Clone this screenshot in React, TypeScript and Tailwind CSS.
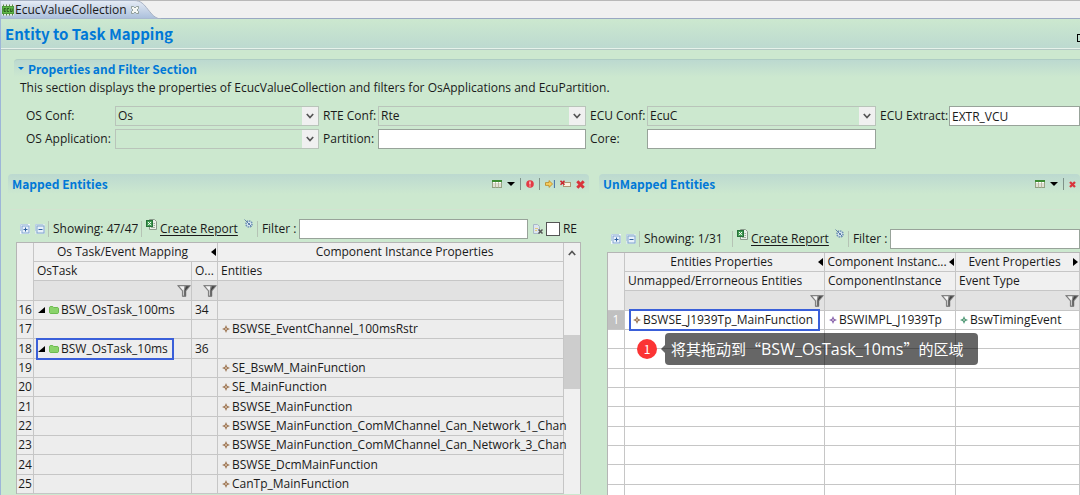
import { ReactNode } from "react";
import clsx from "clsx";

const entityRows = [
  { no: 16, task: "BSW_OsTask_100ms", order: "34" },
  { no: 17, entity: "BSWSE_EventChannel_100msRstr" },
  { no: 18, task: "BSW_OsTask_10ms", order: "36", marked: true },
  { no: 19, entity: "SE_BswM_MainFunction" },
  { no: 20, entity: "SE_MainFunction" },
  { no: 21, entity: "BSWSE_MainFunction" },
  { no: 22, entity: "BSWSE_MainFunction_ComMChannel_Can_Network_1_Chan" },
  { no: 23, entity: "BSWSE_MainFunction_ComMChannel_Can_Network_3_Chan" },
  { no: 24, entity: "BSWSE_DcmMainFunction" },
  { no: 25, entity: "CanTp_MainFunction" },
];

const emptyRows = [2, 3, 4, 5, 6, 7, 8, 9, 10];

const cell = "border-r border-b border-[#c6c6c6] p-0";
const line = "h-[19px] nth-[3n]:h-5";
const heading = "font-['Noto_Sans_CJK_SC',sans-serif] font-bold text-[#0078d7]";

function EcuIcon() {
  return (
    <svg width="12" height="12" viewBox="0 0 12 12" className="shrink-0">
      <rect y="0.5" width="12" height="11" fill="#e4efdf" />
      <path d="M1.500 0.500v11M4.500 0.500v11M7.500 0.500v11M10.500 0.500v11" stroke="#4a6b40" strokeWidth="0.900" />
      <rect x="0.5" y="2.5" width="11" height="7" fill="#62b84a" stroke="#4b9a38" />
      <path
        d="M3.8 4.5H2v3h1.8M2 6h1.6M7 4.5H5.2v3H7M8.4 4.5v3h1.8v-3"
        fill="none"
        stroke="#1f4d17"
        strokeWidth="0.8"
      />
    </svg>
  );
}

function TabCloseIcon() {
  return (
    <svg width="8" height="8" viewBox="0 0 8 8">
      <path
        d="M0.5 0.5h2L4 2 5.500.5h2v2L6 4l1.500 1.500v2h-2L4 6 2.500 7.500h-2v-2L2 4 .5 2.500z"
        fill="#f4f7f4"
        stroke="#7d8d86"
        strokeWidth="0.8"
      />
    </svg>
  );
}

function Chevron({ up }: { up?: boolean }) {
  return (
    <svg width="8" height="6" viewBox="0 0 8 6">
      <path
        d={up ? "M0.8 5 4 1.500 7.200 5" : "M0.8 1 4 4.500 7.200 1"}
        fill="none"
        stroke="#555"
        strokeWidth="1.700"
      />
    </svg>
  );
}

function TreeBox({ minus }: { minus?: boolean }) {
  return (
    <svg width="10" height="10" viewBox="0 0 10 10">
      <rect width="10" height="10" fill={minus ? "#dcebe8" : "#f4f9fb"} />
      <path d="M0.500 7V0.500H8" fill="none" stroke="#b9cfe4" />
      <rect x="2" y="2" width="7" height="7" fill="#e8f1fa" stroke="#7fa3cf" />
      <path
        d={minus ? "M3.500 5.500h4" : "M3.500 5.500h4M5.500 3.500v4"}
        stroke="#2d5f9f"
      />
    </svg>
  );
}

function ExcelIcon() {
  return (
    <svg width="11" height="11" viewBox="0 0 11 11">
      <path d="M3.500 0.500h5l2 2v8h-7z" fill="#e9efe9" stroke="#8b9a8b" />
      <path d="M5 8.500h4M7.500 4.500H9M7.500 6.500H9" stroke="#9db59d" />
      <rect x="0.500" y="1.500" width="6" height="6" fill="#3c9a4e" stroke="#27713a" />
      <path d="m2 3 3 3.200M5 3 2 6.200" stroke="#fff" />
    </svg>
  );
}

function GearIcon() {
  return (
    <svg width="9" height="9" viewBox="0 0 9 9">
      <circle cx="5" cy="5" r="3" fill="#d7e8f0" stroke="#6d8fb5" strokeWidth="1.500" strokeDasharray="1.500 0.800" />
      <circle cx="5" cy="5" r="1" fill="#4c75a8" />
      <path d="m0.500 0.500 7 7" stroke="#4c6f9c" strokeWidth="0.800" />
    </svg>
  );
}

function TableIcon() {
  return (
    <svg width="10" height="8" viewBox="0 0 10 8">
      <rect x="0.500" y="0.500" width="9" height="7" fill="#fff" stroke="#8f9f80" />
      <path d="M0 1h10" stroke="#3d8c32" strokeWidth="2" />
      <path d="M3.500 2v6M6.500 2v6M0 4h10M0 6h10" stroke="#a9a98a" strokeWidth="0.700" />
    </svg>
  );
}

function ErrorIcon() {
  return (
    <svg width="8" height="8" viewBox="0 0 8 8">
      <circle cx="4" cy="4" r="3.800" fill="#e23a44" />
      <path d="M4 1.600v3M4 5.400v1.200" stroke="#ffe5e5" strokeWidth="1.300" />
    </svg>
  );
}

function MoveIcon() {
  return (
    <svg width="10" height="8" viewBox="0 0 10 8">
      <path
        d="M0.500 2.600h3.500V0.600L7.600 4 4 7.400v-2H0.500z"
        fill="#f7cf62"
        stroke="#b98621"
        strokeWidth="0.800"
      />
      <path d="M9.400 0v8" stroke="#3f6ea8" />
    </svg>
  );
}

function UnmapIcon() {
  return (
    <svg width="11" height="8" viewBox="0 0 11 8">
      <rect x="3.500" y="2.500" width="7" height="4" fill="#fbf1e0" stroke="#b09573" />
      <path d="m0.500 0.800 4 4M4.500 0.800l-4 4" stroke="#cc2630" strokeWidth="1.600" />
    </svg>
  );
}

function DeleteIcon({ small }: { small?: boolean }) {
  const size = small ? 7 : 9;
  return (
    <svg width={size} height={size} viewBox="0 0 9 9">
      <path d="m1.300 1.300 6.400 6.400M7.700 1.300 1.300 7.700" stroke="#d9343c" strokeWidth="3" />
    </svg>
  );
}

function ClearIcon() {
  return (
    <svg width="10" height="10" viewBox="0 0 10 10">
      <path d="M0.500 0.500h4l2 2v7h-6z" fill="#dce6ef" stroke="#a9b8c6" />
      <path d="M2 4.500h3M2 6.500h2" stroke="#e3c97e" />
      <path d="m5.500 5.500 4 4M9.500 5.500l-4 4" stroke="#555" strokeWidth="1.500" />
    </svg>
  );
}

function FunnelIcon() {
  return (
    <svg width="14" height="12" viewBox="0 0 14 12">
      <path d="M0.600 0.600h12.800L8.800 6v5.400H5.400V6z" fill="#8a8a8a" stroke="#666" strokeWidth="0.700" />
      <path d="M2.400 1.200h5L6.600 6v4.600H6V5.600z" fill="#f4f4f4" />
      <path d="M9 1.200h3.200L8.400 5.600v5.200h-.8V5.600z" fill="#444" />
    </svg>
  );
}

function FolderIcon() {
  return (
    <svg width="10" height="8" viewBox="0 0 10 8">
      <path
        d="M0.500 1.200 1.200 0.500h2.600l.8 1h4.200l.7.700v4.600l-.7.700H1.200l-.7-.7z"
        fill="#8ad36b"
        stroke="#6dbb50"
      />
    </svg>
  );
}

function Diamond({ className }: { className: string }) {
  return (
    <svg width="8" height="8" viewBox="0 0 8 8" className={clsx("shrink-0", className)}>
      <path d="M4 0 5.200 2.800 8 4 5.200 5.200 4 8 2.800 5.200 0 4l2.800-1.200z" fill="currentColor" />
      <circle cx="4" cy="4" r="0.800" fill="#f3e9dc" />
    </svg>
  );
}

function Arrow({ right }: { right?: boolean }) {
  return (
    <svg width="5" height="8" viewBox="0 0 5 8" className="absolute right-px">
      <path d={right ? "M0 0v8l5-4z" : "M5 0v8L0 4z"} fill="#000" />
    </svg>
  );
}

function Separator() {
  return <span className="h-4 w-px bg-[#b5c3b5]" />;
}

function SelectField({ label, value }: { label: string; value: string }) {
  return (
    <>
      <label htmlFor={label}>{label}</label>
      <div className="relative h-5">
        <select
          id={label}
          defaultValue={value}
          className="block h-full w-full appearance-none border border-[#b9c4ba] bg-[#cce8cf] px-0.5 outline-none"
        >
          <option>{value}</option>
        </select>
        <span className="pointer-events-none absolute inset-y-px right-px flex w-4 items-center justify-center bg-[#f0f0f0]">
          <Chevron />
        </span>
      </div>
    </>
  );
}

function TextField({ label, value }: { label: string; value?: string }) {
  return (
    <>
      <label htmlFor={label}>{label}</label>
      <input
        id={label}
        defaultValue={value}
        className="h-5 w-full min-w-0 border border-[#98a39a] bg-white px-0.5 outline-none"
      />
    </>
  );
}

interface PanelProps {
  title: string;
  actions: ReactNode;
  children: ReactNode;
}

function Panel({ title, actions, children }: PanelProps) {
  return (
    <section className="min-w-0">
      <div className="flex h-5 items-center justify-between rounded-t-sm bg-linear-to-b from-[#bcd9d0] to-[#cce8cf] px-1">
        <h2 className={heading}>{title}</h2>
        <div className="flex items-center gap-[5px]">{actions}</div>
      </div>
      <div className="mx-0.5 mt-[15px] border-t border-[#d3e3d0]">{children}</div>
    </section>
  );
}

function ViewMenu() {
  return (
    <>
      <button aria-label="Columns">
        <TableIcon />
      </button>
      <button aria-label="View menu">
        <svg width="8" height="4" viewBox="0 0 8 4">
          <path d="M0 0h8L4 4z" />
        </svg>
      </button>
      <span className="h-3 w-px bg-[#7f9389]" />
    </>
  );
}

interface ToolbarProps {
  id: string;
  showing: string;
  children?: ReactNode;
}

function Toolbar({ id, showing, children }: ToolbarProps) {
  return (
    <div className="flex h-5 items-center">
      <button aria-label="Expand all">
        <TreeBox />
      </button>
      <button aria-label="Collapse all" className="mr-[3px] ml-[5px]">
        <TreeBox minus />
      </button>
      <Separator />
      <span className="ml-1 w-[85px] shrink-0 overflow-hidden whitespace-nowrap">{showing}</span>
      <span className="ml-[3px] flex">
        <Separator />
      </span>
      <span className="ml-1 self-start">
        <ExcelIcon />
      </span>
      <a href="#report" className="ml-[3px] shrink-0 whitespace-nowrap underline underline-offset-2">
        Create Report
      </a>
      <button aria-label="Report settings" className="mr-1 ml-1.5 self-start">
        <GearIcon />
      </button>
      <Separator />
      <label htmlFor={id} className="mr-[3px] ml-1 shrink-0 whitespace-nowrap">
        Filter :
      </label>
      <input id={id} className="h-5 min-w-0 flex-1 border border-[#98a39a] bg-white px-1 outline-none" />
      {children}
    </div>
  );
}

function GroupHead({ title, right }: { title: string; right?: boolean }) {
  return (
    <div className="relative flex items-center justify-center pr-1.5 whitespace-nowrap">
      {title}
      <Arrow right={right} />
    </div>
  );
}

function FilterCell() {
  return (
    <td className={clsx(cell, "bg-[#e2e2e2]")}>
      <button aria-label="Filter column" className="ml-auto block">
        <FunnelIcon />
      </button>
    </td>
  );
}

function MappedTable() {
  return (
    <div className="flex border border-b-0 border-[#b5b5b5] bg-[#f0f0f0]">
      <div className="min-w-0 flex-1">
        <table className="w-full table-fixed border-separate border-spacing-0 bg-[#ededed] text-left leading-4">
          <colgroup>
            <col className="w-[17px]" />
            <col className="w-[158px]" />
            <col className="w-[26px]" />
            <col />
          </colgroup>
          <thead className="bg-[#f0f0f0]">
            <tr className={line}>
              <th rowSpan={3} className={cell} />
              <th colSpan={2} className={clsx(cell, "font-normal")}>
                <GroupHead title="Os Task/Event Mapping" />
              </th>
              <th className={clsx(cell, "pl-7 text-center font-normal")}>
                Component Instance Properties
              </th>
            </tr>
            <tr className={line}>
              <th className={clsx(cell, "pl-[3px] font-normal")}>OsTask</th>
              <th className={clsx(cell, "pl-[3px] font-normal")}>O...</th>
              <th className={clsx(cell, "pl-[3px] font-normal")}>Entities</th>
            </tr>
            <tr className={line}>
              <FilterCell />
              <FilterCell />
              <td className={clsx(cell, "bg-[#e2e2e2]")} />
            </tr>
          </thead>
          <tbody>
            {entityRows.map((row) => (
              <tr key={row.no} className={line}>
                <td className={clsx(cell, "text-center")}>{row.no}</td>
                <td className={cell}>
                  {row.task && (
                    <div className="relative flex items-center pl-1">
                      {row.marked && (
                        <span className="absolute -inset-y-[3px] left-[2px] w-[138px] border-2 border-[#3a5fd9]" />
                      )}
                      <svg width="7" height="6" viewBox="0 0 7 6">
                        <path d="M7 0v6H0z" />
                      </svg>
                      <span className="mr-0.5 ml-1">
                        <FolderIcon />
                      </span>
                      {row.task}
                    </div>
                  )}
                </td>
                <td className={clsx(cell, "pl-[3px]")}>{row.order}</td>
                <td className={cell}>
                  {row.entity && (
                    <div className="flex items-center gap-0.5 pl-1 whitespace-nowrap">
                      <Diamond className="text-[#a07a58]" />
                      {row.entity}
                    </div>
                  )}
                </td>
              </tr>
            ))}
          </tbody>
        </table>
      </div>
      <div className="flex w-4 flex-col items-center">
        <button aria-label="Scroll up" className="flex h-5 items-center">
          <Chevron up />
        </button>
        <div className="mt-[72px] h-[54px] w-full bg-[#cdcdcd]" />
      </div>
    </div>
  );
}

function UnmappedTable() {
  return (
    <div className="relative border-t border-l border-[#b5b5b5]">
      <table className="w-full table-fixed border-separate border-spacing-0 bg-white text-left leading-4">
        <colgroup>
          <col className="w-[17px]" />
          <col className="w-[200px]" />
          <col className="w-[131px]" />
          <col />
        </colgroup>
        <thead className="bg-[#f0f0f0]">
          <tr className={line}>
            <th rowSpan={3} className={cell} />
            <th className={clsx(cell, "font-normal")}>
              <GroupHead title="Entities Properties" />
            </th>
            <th className={clsx(cell, "font-normal")}>
              <GroupHead title="Component Instanc..." />
            </th>
            <th className={clsx(cell, "font-normal")}>
              <GroupHead title="Event Properties" right />
            </th>
          </tr>
          <tr className={line}>
            <th className={clsx(cell, "pl-[3px] font-normal")}>Unmapped/Errorneous Entities</th>
            <th className={clsx(cell, "pl-[3px] font-normal")}>ComponentInstance</th>
            <th className={clsx(cell, "pl-[3px] font-normal")}>Event Type</th>
          </tr>
          <tr className={line}>
            <FilterCell />
            <FilterCell />
            <FilterCell />
          </tr>
        </thead>
        <tbody>
          <tr className={line}>
            <td className={clsx(cell, "bg-[#c0c0c0] text-center text-white")}>1</td>
            <td className={cell}>
              <div className="relative flex items-center gap-0.5 pl-2 whitespace-nowrap">
                <span className="absolute -inset-y-[3px] left-1 w-[191px] border-2 border-[#3a5fd9]" />
                <Diamond className="text-[#a07a58]" />
                BSWSE_J1939Tp_MainFunction
              </div>
            </td>
            <td className={cell}>
              <div className="flex items-center gap-0.5 pl-1">
                <Diamond className="text-[#8a66b0]" />
                BSWIMPL_J1939Tp
              </div>
            </td>
            <td className={cell}>
              <div className="flex items-center gap-0.5 pl-1">
                <Diamond className="text-[#4f9a78]" />
                BswTimingEvent
              </div>
            </td>
          </tr>
          {emptyRows.map((no) => (
            <tr key={no} className={line}>
              <td className={clsx(cell, no === 2 && "bg-white")} />
              <td className={cell} />
              <td className={cell} />
              <td className={cell} />
            </tr>
          ))}
        </tbody>
      </table>

      {/* drag hint floating under the first row */}
      <div className="absolute top-20 left-[29px] flex items-center font-['Noto_Sans_CJK_SC',sans-serif]">
        <span className="flex size-5 items-center justify-center rounded-full bg-[#fb3434] text-xs text-white">
          1
        </span>
        <svg width="4" height="8" viewBox="0 0 4 8" className="ml-1">
          <path d="M4 0v8L0 4z" fill="#000" fillOpacity="0.6" />
        </svg>
        <span className="flex h-8 w-[313px] items-center rounded-sm bg-black/60 px-1.5 text-[15px] whitespace-nowrap text-white">
          将其拖动到“
          <span className="font-['Open_Sans',sans-serif] text-base">BSW_OsTask_10ms</span>
          ”的区域
        </span>
      </div>
    </div>
  );
}

export default function App() {
  return (
    <div className="flex h-screen flex-col overflow-hidden bg-[#cce8cf] font-['Open_Sans','Noto_Sans_CJK_SC',sans-serif] text-xs text-[#1a1a1a]">
      <div className="relative h-[19px] shrink-0 border-t border-b border-t-[#b8b8b8] border-b-[#9aa8c2] bg-[#f0f0f0]">
        <svg width="161" height="19" viewBox="0 0 161 19" className="absolute -top-px left-0">
          <defs>
            <linearGradient id="tab" x1="0" y1="0" x2="0" y2="1">
              <stop offset="0" stopColor="#e6ecf5" />
              <stop offset="1" stopColor="#a9bedb" />
            </linearGradient>
          </defs>
          <path
            d="M0 .5h134c7 0 10 4 14 9 4 5 7 9 13 9.500H0z"
            fill="url(#tab)"
            stroke="#a7b2c4"
          />
        </svg>
        <div className="relative flex h-full items-center gap-px pl-0.5">
          <EcuIcon />
          <span>EcucValueCollection</span>
          <button aria-label="Close tab" className="ml-[3px]">
            <TabCloseIcon />
          </button>
        </div>
      </div>

      <main className="flex-1 border-l border-[#9db6d8]">
        <header className="flex h-[31px] items-center justify-between border-b border-[#b4c8c4] bg-linear-to-b from-[#cce8cf] to-[#bcd9d0] pl-1 shadow-[inset_0_-1px_0_#e6f2ea]">
          <h1 className={clsx(heading, "text-[15px]")}>Entity to Task Mapping</h1>
          <button aria-label="Restore" className="mt-2 h-2 w-[3px] border border-r-0 border-black" />
        </header>

        <section className="mt-[9px] ml-[13px]">
          <div className="flex h-[18px] items-center gap-1 rounded-tl-sm border-t border-[#aecdc4] bg-linear-to-b from-[#bcd9d0] to-[#cce8cf] pl-1">
            <svg width="6" height="3" viewBox="0 0 6 3">
              <path d="M0 0h6L3 3z" fill="#0078d7" />
            </svg>
            <h2 className={heading}>Properties and Filter Section</h2>
          </div>
          <p className="mt-[3px] ml-1.5">
            This section displays the properties of EcucValueCollection and filters for OsApplications and
            EcuPartition.
          </p>
          <form className="mt-2.5 grid grid-cols-[85px_204fr_51px_208fr_53px_229fr_65px_131fr] items-center gap-x-1 gap-y-[3px] pl-3 whitespace-nowrap">
            <SelectField label="OS Conf:" value="Os" />
            <SelectField label="RTE Conf:" value="Rte" />
            <SelectField label="ECU Conf:" value="EcuC" />
            <TextField label="ECU Extract:" value="EXTR_VCU" />
            <SelectField label="OS Application:" value="" />
            <TextField label="Partition:" />
            <TextField label="Core:" />
          </form>
        </section>

        <div className="mt-[25px] grid grid-cols-[581fr_481fr] gap-2.5 pl-[7px]">
          <Panel
            title="Mapped Entities"
            actions={
              <>
                <ViewMenu />
                <button aria-label="Show errors">
                  <ErrorIcon />
                </button>
                <span className="h-3 w-px bg-[#7f9389]" />
                <button aria-label="Move">
                  <MoveIcon />
                </button>
                <button aria-label="Unmap">
                  <UnmapIcon />
                </button>
                <button aria-label="Delete">
                  <DeleteIcon />
                </button>
              </>
            }
          >
            <div className="px-1.5 pt-[9px]">
              <div className="mb-[3px] pl-1">
                <Toolbar id="mapped-filter" showing="Showing: 47/47">
                  <button aria-label="Clear filter" className="mr-[3px] ml-[5px]">
                    <ClearIcon />
                  </button>
                  <input
                    id="mapped-re"
                    type="checkbox"
                    className="size-3.5 appearance-none border border-[#555] bg-white"
                  />
                  <label htmlFor="mapped-re" className="mr-1 ml-[3px]">
                    RE
                  </label>
                </Toolbar>
              </div>
              <MappedTable />
            </div>
          </Panel>

          <Panel
            title="UnMapped Entities"
            actions={
              <>
                <ViewMenu />
                <button aria-label="Delete">
                  <DeleteIcon small />
                </button>
              </>
            }
          >
            <div className="-mr-0.5 pt-[19px] pl-1.5">
              <div className="mb-[3px] pl-1">
                <Toolbar id="unmapped-filter" showing="Showing: 1/31" />
              </div>
              <UnmappedTable />
            </div>
          </Panel>
        </div>
      </main>
    </div>
  );
}
